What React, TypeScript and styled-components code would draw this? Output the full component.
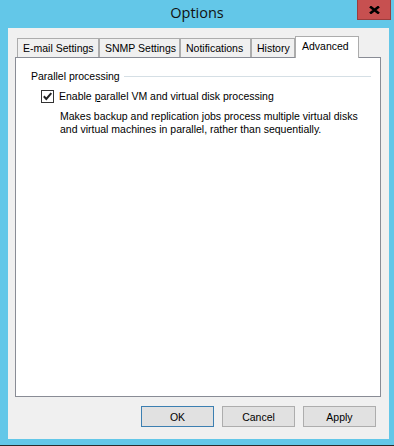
import React, { useState } from "react";
import styled, { createGlobalStyle } from "styled-components";

const Global = createGlobalStyle`
  html, body { margin: 0; padding: 0; background: #63c7e8; }
  body { font-family: "Liberation Sans", Arial, sans-serif; font-size: 10.5px; color: #000; }
  * { box-sizing: border-box; }
`;

const Window = styled.div`
  width: 394px;
  height: 446px;
  background: #63c7e8;
  border-bottom: 1px solid #2b2b2b;
  display: flex;
  flex-direction: column;
`;

const TitleBar = styled.div`
  height: 28px;
  flex: none;
  display: grid;
  grid-template-columns: 1fr auto 1fr;
  align-items: start;
`;

const Title = styled.div`
  grid-column: 2;
  font-family: "Open Sans", "Noto Sans", sans-serif;
  font-size: 14.5px;
  line-height: 28px;
  margin-top: -1px;
  color: #111;
`;

const CloseButton = styled.button`
  grid-column: 3;
  justify-self: end;
  margin-right: 3px;
  width: 34px;
  height: 20px;
  padding: 0;
  background: #c75050;
  border: 1px solid #9a3d3d;
  border-top: none;
  display: flex;
  align-items: center;
  justify-content: center;
  cursor: default;
`;

const Client = styled.div`
  flex: 1;
  margin: 0 5px 6px 8px;
  background: #f0f0f0;
  display: flex;
  flex-direction: column;
  padding: 8px 8px 12px 7px;
`;

const TabStrip = styled.div`
  height: 22px;
  flex: none;
  display: flex;
  align-items: flex-end;
  padding-left: 2px;
  margin-bottom: -1px;
  position: relative;
  z-index: 1;
`;

const Tab = styled.div<{ $w: number; $active?: boolean }>`
  width: ${(p) => p.$w}px;
  height: ${(p) => (p.$active ? 22 : 19)}px;
  margin-bottom: ${(p) => (p.$active ? 0 : 1)}px;
  border: 1px solid #acacac;
  border-bottom: none;
  background: ${(p) => (p.$active ? "#ffffff" : "#f0f0f0")};
  padding: ${(p) => (p.$active ? "3px 0 0 6px" : "3px 0 0 5px")};
  line-height: 13px;
  white-space: nowrap;
`;

const Panel = styled.div`
  flex: 1;
  background: #fff;
  border: 1px solid #898c95;
  display: flex;
  flex-direction: column;
  padding: 12px 9px 0 15px;
`;

const GroupHeader = styled.div`
  display: flex;
  align-items: center;
  gap: 4px;
  height: 13px;
  line-height: 13px;
`;

const GroupLine = styled.div`
  flex: 1;
  height: 1px;
  background: #d5dfe5;
`;

const CheckRow = styled.label`
  display: flex;
  align-items: center;
  gap: 5px;
  height: 13px;
  line-height: 13px;
  margin-top: 7px;
  padding-left: 10px;
`;

const Box = styled.span`
  width: 13px;
  height: 13px;
  border: 1px solid #333;
  background: #fff;
  display: flex;
  align-items: center;
  justify-content: center;
  flex: none;
`;

const Description = styled.p`
  margin: 7px 0 0;
  padding-left: 29px;
  line-height: 13px;
  white-space: nowrap;
`;

const ButtonRow = styled.div`
  display: flex;
  justify-content: flex-end;
  gap: 8px;
  margin-top: 9px;
  padding-right: 5px;
  flex: none;
`;

const Button = styled.button<{ $default?: boolean }>`
  width: 73px;
  height: 21px;
  padding: 0;
  font-family: "Liberation Sans", Arial, sans-serif;
  font-size: 10.5px;
  color: #000;
  background: #e1e1e1;
  border: 1px solid ${(p) => (p.$default ? "#3c7fb1" : "#adadad")};
  cursor: default;
`;

const U = styled.span`
  text-decoration: underline;
`;

export default function App() {
  const [checked, setChecked] = useState(true);
  const tabs: { label: string; w: number }[] = [
    { label: "E-mail Settings", w: 82 },
    { label: "SNMP Settings", w: 81 },
    { label: "Notifications", w: 71 },
    { label: "History", w: 44 },
  ];
  return (
    <>
      <Global />
      <Window>
        <TitleBar>
          <Title>Options</Title>
          <CloseButton aria-label="Close">
            <svg width="11" height="8" viewBox="0 0 11 8">
              <path d="M1 0.5 L10 7.5 M10 0.5 L1 7.5" stroke="#000" strokeWidth="2.6" />
            </svg>
          </CloseButton>
        </TitleBar>
        <Client>
          <TabStrip>
            {tabs.map((t) => (
              <Tab key={t.label} $w={t.w}>
                {t.label}
              </Tab>
            ))}
            <Tab $w={64} $active>
              Advanced
            </Tab>
          </TabStrip>
          <Panel>
            <GroupHeader>
              <span>Parallel processing</span>
              <GroupLine />
            </GroupHeader>
            <CheckRow onClick={() => setChecked((c) => !c)}>
              <Box>
                {checked && (
                  <svg width="11" height="11" viewBox="0 0 11 11">
                    <path d="M1.8 5.3 L4.3 7.9 L9.3 2.2" fill="none" stroke="#222" strokeWidth="2" />
                  </svg>
                )}
              </Box>
              <span>
                Enable <U>p</U>arallel VM and virtual disk processing
              </span>
            </CheckRow>
            <Description>
              Makes backup and replication jobs process multiple virtual disks
              <br />
              and virtual machines in parallel, rather than sequentially.
            </Description>
          </Panel>
          <ButtonRow>
            <Button $default>OK</Button>
            <Button>Cancel</Button>
            <Button>Apply</Button>
          </ButtonRow>
        </Client>
      </Window>
    </>
  );
}
